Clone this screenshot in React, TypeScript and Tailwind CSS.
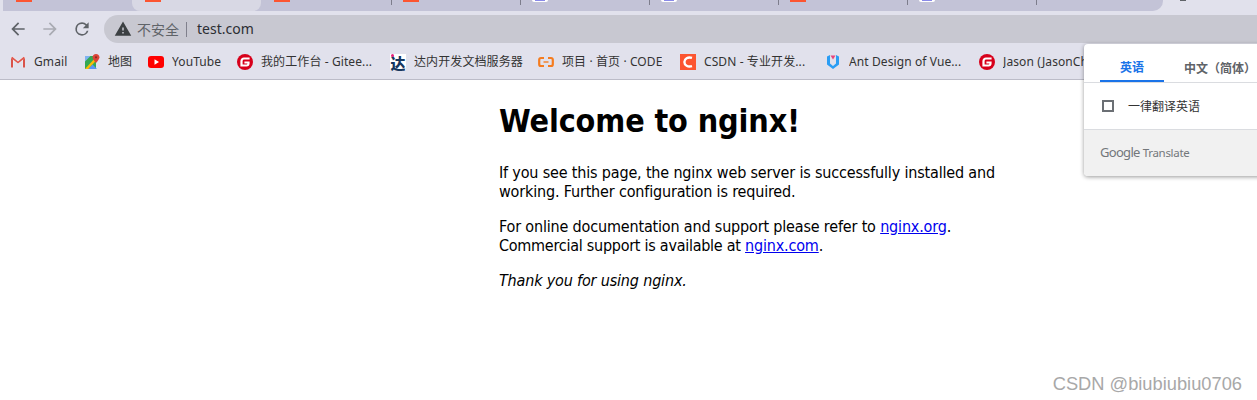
const cjk = '"Noto Sans CJK SC"';
function Favicon({ kind }: { kind: string }) {
  if (kind === "gmail")
    return (
      <svg width="16" height="16" viewBox="0 0 16 16">
        <path d="M1 3.5V13.5H3.5V6.5L8 10L12.5 6.5V13.5H15V3.5L13.5 2.5L8 7L2.5 2.5Z" fill="#eef0f4" />
        <path d="M1 13.5V4L3 5.6V13.5Z" fill="#d9534a" />
        <path d="M15 13.5V4L13 5.6V13.5Z" fill="#d9534a" />
        <path d="M1 4L2.3 2.8L8 7.4L13.7 2.8L15 4L8 9.6Z" fill="#e2574c" />
      </svg>
    );
  if (kind === "maps")
    return (
      <svg width="16" height="16" viewBox="0 0 16 16">
        <rect x="1" y="2" width="11" height="13" fill="#34a853" />
        <path d="M1 15L12 3V6.5L4.5 15Z" fill="#fbbc04" />
        <path d="M4.5 15L8.5 10.5L13 15Z" fill="#5a95f5" />
        <path d="M1 2H6.5L1 7.5Z" fill="#7fb2f0" />
        <path d="M12 0C9.9 0 8.6 1.6 8.6 3.3C8.6 5.6 12 9 12 9C12 9 15.4 5.6 15.4 3.3C15.4 1.6 14.1 0 12 0Z" fill="#db4437" />
        <circle cx="12" cy="3.3" r="1.1" fill="#8c2a22" />
      </svg>
    );
  if (kind === "youtube")
    return (
      <svg width="16" height="16" viewBox="0 0 16 16">
        <rect x="0" y="2" width="16" height="12" rx="3" fill="#f00" />
        <path d="M6.5 5.3L11 8L6.5 10.7Z" fill="#fff" />
      </svg>
    );
  if (kind === "gitee")
    return (
      <svg width="16" height="16" viewBox="0 0 16 16">
        <circle cx="8" cy="8" r="8" fill="#d7001b" />
        <path d="M12.6 3.4H7C5 3.4 3.4 5 3.4 7V12.6H9.6C11.3 12.6 12.6 11.3 12.6 9.6V7.4H7.4V9.4H10.4C10.4 10.1 9.9 10.6 9.2 10.6H5.6V7.2C5.6 6.2 6.3 5.5 7.3 5.5H12.6Z" fill="#fff" />
      </svg>
    );
  if (kind === "tarena")
    return (
      <span className="relative flex h-4 w-4 items-center justify-center bg-white text-[15px] font-black leading-none text-[#17375e]" style={{ fontFamily: cjk }}>
        达
        <span className="absolute left-px top-0 h-[3px] w-[3px] rounded-full bg-[#e6207a]" />
      </span>
    );
  if (kind === "code")
    return (
      <svg width="16" height="16" viewBox="0 0 16 16" fill="none" stroke="#f57c1f" strokeWidth="2.2">
        <path d="M6 4H3Q1.2 4 1.2 5.8V10.2Q1.2 12 3 12H6" />
        <path d="M10 4H13Q14.8 4 14.8 5.8V10.2Q14.8 12 13 12H10" />
        <path d="M5.5 8H10.5" strokeWidth="1.4" />
      </svg>
    );
  if (kind === "csdn")
    return (
      <svg width="16" height="16" viewBox="0 0 16 16">
        <rect width="16" height="16" fill="#fc5531" />
        <path d="M12 3.9C7.8 2.6 4.4 4.6 4.4 8C4.4 11.4 7.8 13.4 12 12.1" fill="none" stroke="#fff" strokeWidth="2.4" />
      </svg>
    );
  return (
    <svg width="16" height="16" viewBox="0 0 16 16">
      <path d="M2 2.5L5 1V9.5L8 12L11 9.5V1L14 2.5V10.5L8 15L2 10.5Z" fill="#2a9df4" />
      <path d="M5.5 1.5H10.5L8 5.5Z" fill="#e8467c" />
    </svg>
  );
}

const bookmarks = [
  { k: "gmail", t: "Gmail", w: 74 },
  { k: "maps", t: "地图", w: 64 },
  { k: "youtube", t: "YouTube", w: 89 },
  { k: "gitee", t: "我的工作台 - Gitee...", w: 153 },
  { k: "tarena", t: "达内开发文档服务器", w: 148 },
  { k: "code", t: "项目 · 首页 · CODE", w: 142 },
  { k: "csdn", t: "CSDN - 专业开发...", w: 145 },
  { k: "ant", t: "Ant Design of Vue...", w: 154 },
  { k: "gitee", t: "Jason (JasonChen...", w: 150 },
];

const tabs = ["#fc5531", "#fc5531", "#fc5531", "#fc5531", "white", "white", "#fc5531", "white", ""];

export default function App() {
  return (
    <div className="relative h-[400px] w-[1257px] overflow-hidden bg-white" style={{ fontFamily: `"Noto Sans", ${cjk}, sans-serif` }}>
      <div className="flex h-[11px] items-start bg-[#e1e1ec] pl-[3px]">
        <div className="flex h-[11px] w-[1160px] overflow-hidden rounded-br-[10px] bg-[#c3c3d7]">
          {tabs.map((c, i) => (
            <div key={i} className={`relative h-full w-[129px] shrink-0 ${i === 1 ? "rounded-b-[8px] bg-[#d8d8e4]" : ""}`}>
              {c === "white" ? (
                <div className="ml-[13px] flex h-[2px] w-4 justify-center rounded-b-[2px] bg-white">
                  <div className="h-px w-[10px] bg-[#8a8ae8]" />
                </div>
              ) : c ? (
                <div className="ml-[13px] h-[2px] w-4" style={{ background: c }} />
              ) : null}
              {i > 1 && <div className="absolute right-[-2px] top-0 h-[5px] w-px bg-[#7d7d8c]" />}
            </div>
          ))}
        </div>
      </div>
      <div className="absolute left-[1180px] top-0 h-px w-[6px] bg-[#5f6368]" />
      <div className="flex h-[36px] items-center bg-[#e1e1ec] pl-[8px]">
        <svg width="20" height="20" viewBox="0 0 24 24" className="fill-[#5f6368]"><path d="M20 11H7.83l5.59-5.59L12 4l-8 8 8 8 1.41-1.41L7.83 13H20z" /></svg>
        <svg width="20" height="20" viewBox="0 0 24 24" className="ml-[12px] fill-[#a9abb2]"><path d="M4 11h12.17l-5.59-5.59L12 4l8 8-8 8-1.41-1.41L16.17 13H4z" /></svg>
        <svg width="20" height="20" viewBox="0 0 24 24" className="ml-[12px] fill-[#5f6368]"><path d="M17.65 6.35A7.96 7.96 0 0 0 12 4a8 8 0 1 0 7.73 10h-2.08A6 6 0 1 1 12 6c1.66 0 3.14.69 4.22 1.78L13 11h7V4z" /></svg>
        <div className="ml-[12px] flex h-7 w-[1153px] items-center rounded-l-[14px] bg-[#c8c8d1] pl-[10px]">
          <svg width="18" height="18" viewBox="0 0 24 24" className="fill-[#3c4043]"><path d="M1 21h22L12 2zm12-3h-2v-2h2zm0-4h-2v-4h2z" /></svg>
          <span className="ml-[5px] text-[14px] leading-none text-[#5f6368]" style={{ fontFamily: cjk }}>不安全</span>
          <span className="ml-[7px] h-[15px] w-px bg-[#80808c]" />
          <span className="ml-[10px] text-[14px] leading-none text-[#2c2e33]" style={{ fontFamily: '"Noto Sans", sans-serif' }}>test.com</span>
        </div>
      </div>
      <div className="flex h-[33px] items-center border-b border-[#bcbcc8] bg-[#e1e1ec] pb-[2px] pl-[10px]">
        {bookmarks.map((b, i) => (
          <div key={i} className="flex shrink-0 items-center gap-2" style={{ width: b.w }}>
            <Favicon kind={b.k} />
            <span className="overflow-hidden whitespace-nowrap text-[12px] leading-4 tracking-[0.1px] text-[#333]">{b.t}</span>
          </div>
        ))}
      </div>

      <main className="ml-[499px] w-[540px] text-[16px] leading-[19px] tracking-[-0.17px] text-black" style={{ fontFamily: '"DejaVu Sans Condensed", "Liberation Sans", sans-serif', fontStretch: "condensed" }}>
        <h1 className="mt-[22px] text-[32px] font-bold leading-[39px] tracking-[-0.12px]">Welcome to nginx!</h1>
        <p className="mt-[22px]">If you see this page, the nginx web server is successfully installed and<br />working. Further configuration is required.</p>
        <p className="mt-4">For online documentation and support please refer to <a className="text-[#0000ee] underline">nginx.org</a>.<br /><span className="tracking-[-0.26px]">Commercial support is available at </span><a className="text-[#0000ee] underline">nginx.com</a>.</p>
        <p className="mt-4 italic">Thank you for using nginx.</p>
      </main>

      <div className="absolute left-[1084px] top-[44px] h-[132px] w-[190px] overflow-hidden rounded-[4px] bg-white shadow-[0_1px_4px_rgba(0,0,0,0.4)]">
        <div className="flex h-[39px] items-end border-b border-[#dadce0] pl-4">
          <div className="flex h-[38px] w-[64px] items-center justify-center border-b-2 border-[#1a73e8] pt-[9px] text-[12px] font-bold text-[#1a73e8]" style={{ fontFamily: cjk }}>英语</div>
          <div className="flex h-[38px] items-center whitespace-nowrap pl-[20px] pt-[9px] text-[12px] font-bold text-[#5f6368]" style={{ fontFamily: cjk }}>中文（简体）</div>
        </div>
        <div className="flex h-[47px] items-center border-b border-[#dadce0] pl-[18px]">
          <span className="h-3 w-3 border-2 border-[#6b6f74]" />
          <span className="ml-[14px] text-[12px] text-[#333]" style={{ fontFamily: cjk }}>一律翻译英语</span>
        </div>
        <div className="flex h-[46px] items-center bg-[#f1f1f1] pl-4 text-[#73777b]">
          <span className="text-[13px] tracking-[-0.7px]">Google</span>
          <span className="ml-[3px] text-[11.5px] tracking-[-0.3px]">Translate</span>
        </div>
      </div>

      <div className="absolute right-[15px] top-[372px] text-[18.3px] leading-6 text-[#a8a8a8]" style={{ fontFamily: '"Liberation Sans", sans-serif' }}>CSDN @biubiubiu0706</div>
    </div>
  );
}
